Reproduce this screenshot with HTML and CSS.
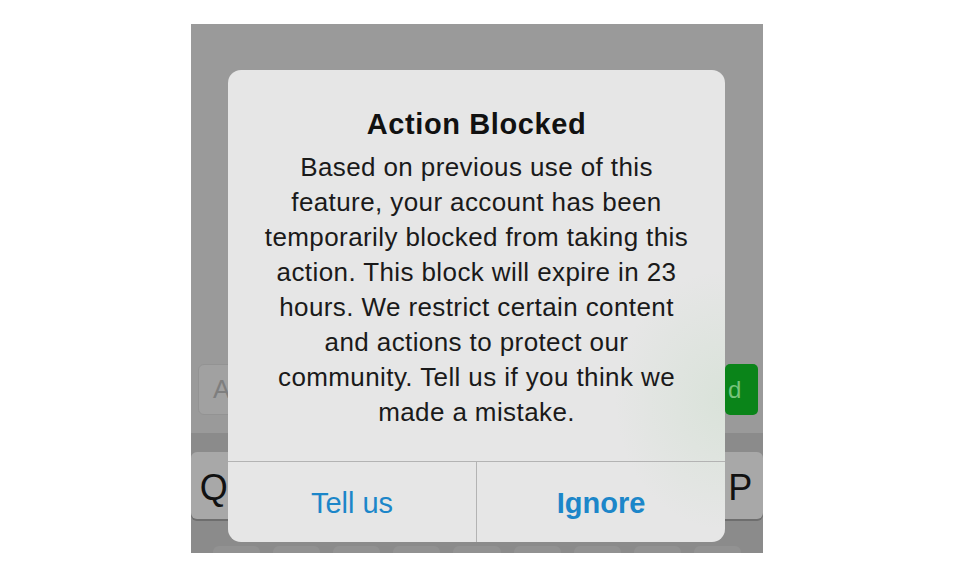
FILE: index.html
```html
<!DOCTYPE html>
<html>
<head>
<meta charset="utf-8">
<link rel="stylesheet" href="styles.css">
</head>
<body>
<div class="screen">
  <div class="input-row">
    <div class="input"><span class="placeholder">A</span></div>
    <div class="send"><span>d</span></div>
  </div>
  <div class="keyboard">
    <div class="key-row">
      <div class="key">Q</div><div class="key"></div><div class="key"></div><div class="key"></div><div class="key"></div>
      <div class="key"></div><div class="key"></div><div class="key"></div><div class="key"></div><div class="key">P</div>
    </div>
    <div class="key-row second">
      <div class="key"></div><div class="key"></div><div class="key"></div><div class="key"></div><div class="key"></div>
      <div class="key"></div><div class="key"></div><div class="key"></div><div class="key"></div>
    </div>
  </div>

  <div class="dialog">
    <div class="dialog-body">
      <h1 class="title">Action Blocked</h1>
      <p class="message">Based on previous use of this<br>feature, your account has been<br>temporarily blocked from taking this<br>action. This block will expire in 23<br>hours. We restrict certain content<br>and actions to protect our<br>community. Tell us if you think we<br>made a mistake.</p>
    </div>
    <div class="actions">
      <div class="action">Tell us</div>
      <div class="action primary">Ignore</div>
    </div>
  </div>
</div>
</body>
</html>
```

FILE: styles.css
```css
html, body {
  margin: 0;
  padding: 0;
  background: #ffffff;
}

body {
  font-family: "Liberation Sans", Arial, sans-serif;
  padding-top: 24px;
  padding-left: 191px;
}

.screen {
  position: relative;
  width: 572px;
  height: 529px;
  background: #9a9a9a;
  overflow: hidden;
  display: flex;
  flex-direction: column;
  padding-top: 340px;
  box-sizing: border-box;
}

.input-row {
  display: flex;
  gap: 10px;
  padding: 0 5px 0 7px;
  height: 51px;
}

.input {
  flex: 1;
  background: #a1a1a1;
  border: 1px solid #939393;
  border-radius: 6px;
  display: flex;
  align-items: center;
  padding-left: 14px;
}

.placeholder {
  font-size: 26px;
  color: #7e7e7e;
}

.send {
  width: 33px;
  background: #0a8419;
  border-radius: 5px;
  display: flex;
  align-items: center;
  padding-left: 3px;
  box-sizing: border-box;
}

.send span {
  font-size: 24px;
  color: #78c47c;
}

.keyboard {
  margin-top: 18px;
  flex: 1;
  background: #8b8b8b;
  padding-top: 19px;
  overflow: hidden;
}

.key-row {
  display: flex;
  gap: 13px;
}

.key {
  flex: 1;
  height: 67px;
  background: #a8a8a8;
  border-radius: 6px;
  box-shadow: 0 2px 0 #6e6e6e;
  display: flex;
  align-items: center;
  justify-content: center;
  font-size: 36px;
  color: #111111;
  padding-top: 4px;
  box-sizing: border-box;
}

.key-row.second {
  margin-top: 27px;
  padding: 0 22px;
}

.key-row.second .key {
  background: #929292;
  box-shadow: none;
}

.dialog {
  position: absolute;
  left: 37px;
  top: 46px;
  width: 497px;
  height: 472px;
  border-radius: 13px;
  background:
    radial-gradient(ellipse 110px 130px at 497px 330px, rgba(160, 210, 160, 0.18), rgba(160, 210, 160, 0) 100%),
    #e6e6e6;
  display: flex;
  flex-direction: column;
  overflow: hidden;
}

.dialog-body {
  flex: 1;
  padding: 36px 20px 0;
  text-align: center;
}

.title {
  margin: 0;
  font-size: 29px;
  line-height: 36px;
  font-weight: bold;
  letter-spacing: 0.6px;
  color: #111111;
}

.message {
  margin: 8px 0 0;
  font-size: 26px;
  line-height: 35px;
  letter-spacing: 0.4px;
  color: #1a1a1a;
  white-space: nowrap;
}

.actions {
  height: 80px;
  border-top: 1px solid #b3b3b3;
  display: grid;
  grid-template-columns: 248px 1fr;
}

.action {
  display: flex;
  align-items: center;
  justify-content: center;
  font-size: 29px;
  color: #1c86c9;
  padding-top: 2px;
}

.action.primary {
  font-weight: bold;
  border-left: 1px solid #b3b3b3;
}
```
